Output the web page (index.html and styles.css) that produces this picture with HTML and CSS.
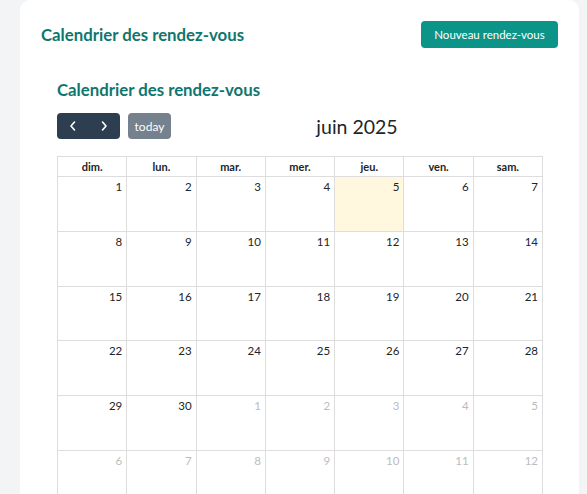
FILE: index.html
```html
<!DOCTYPE html>
<html lang="fr">
<head>
<meta charset="utf-8">
<link rel="stylesheet" href="styles.css">
</head>
<body>
<div class="card">
  <div class="card-header">
    <h1 class="page-title">Calendrier des rendez-vous</h1>
    <button class="btn-new">Nouveau rendez-vous</button>
  </div>
  <div class="cal-wrap">
    <h2 class="cal-title">Calendrier des rendez-vous</h2>
    <div class="toolbar">
      <div class="chunk">
        <div class="btn-group">
          <button class="nav-btn" aria-label="prev"><svg width="10" height="12" viewBox="0 0 10 12"><path d="M6.5 2 L3 6 L6.5 10" fill="none" stroke="#fff" stroke-width="1.6" stroke-linecap="round" stroke-linejoin="round"/></svg></button>
          <button class="nav-btn" aria-label="next"><svg width="10" height="12" viewBox="0 0 10 12"><path d="M3.5 2 L7 6 L3.5 10" fill="none" stroke="#fff" stroke-width="1.6" stroke-linecap="round" stroke-linejoin="round"/></svg></button>
        </div>
        <button class="today-btn" disabled>today</button>
      </div>
      <h2 class="month-title">juin 2025</h2>
      <div class="chunk"></div>
    </div>
    <div class="grid">
      <div class="dow">dim.</div><div class="dow">lun.</div><div class="dow">mar.</div><div class="dow">mer.</div><div class="dow">jeu.</div><div class="dow">ven.</div><div class="dow">sam.</div>
      <div class="day">1</div><div class="day">2</div><div class="day">3</div><div class="day">4</div><div class="day today">5</div><div class="day">6</div><div class="day">7</div>
      <div class="day">8</div><div class="day">9</div><div class="day">10</div><div class="day">11</div><div class="day">12</div><div class="day">13</div><div class="day">14</div>
      <div class="day">15</div><div class="day">16</div><div class="day">17</div><div class="day">18</div><div class="day">19</div><div class="day">20</div><div class="day">21</div>
      <div class="day">22</div><div class="day">23</div><div class="day">24</div><div class="day">25</div><div class="day">26</div><div class="day">27</div><div class="day">28</div>
      <div class="day">29</div><div class="day">30</div><div class="day other">1</div><div class="day other">2</div><div class="day other">3</div><div class="day other">4</div><div class="day other">5</div>
      <div class="day other">6</div><div class="day other">7</div><div class="day other">8</div><div class="day other">9</div><div class="day other">10</div><div class="day other">11</div><div class="day other">12</div>
    </div>
  </div>
</div>
</body>
</html>
```
FILE: styles.css
```css
* { box-sizing: border-box; }
html, body { margin: 0; padding: 0; }
body {
  background: #f3f4f6;
  font-family: Lato, "Open Sans", sans-serif;
  color: #212529;
  overflow: hidden;
  height: 494px;
}
.card {
  margin-left: 20px;
  width: 559px;
  height: 494px;
  overflow: hidden;
  background: #fff;
  border-radius: 10px 10px 0 0;
  padding: 21px 21px 0 21px;
}
.card-header {
  display: flex;
  justify-content: space-between;
  align-items: center;
  height: 27px;
}
.page-title {
  margin: 0;
  font-size: 16.8px;
  font-weight: 700;
  color: #0f766e;
}
.btn-new {
  width: 137px;
  height: 27px;
  border: none;
  border-radius: 4px;
  background: #0d9488;
  color: #fff;
  font-family: inherit;
  font-size: 11.5px;
  font-weight: 400;
  padding: 0;
}
.cal-wrap {
  padding: 30px 15px 0 16px;
}
.cal-title {
  margin: 0;
  font-size: 16.8px;
  line-height: 24px;
  font-weight: 700;
  color: #0f766e;
}
.toolbar {
  margin-top: 11px;
  display: flex;
  justify-content: space-between;
  align-items: center;
  height: 26px;
  margin-bottom: 17px;
}
.chunk { display: flex; align-items: center; gap: 8px; }
.btn-group {
  display: flex;
  background: #2c3e50;
  border-radius: 4px;
  height: 26px;
  width: 63px;
}
.nav-btn {
  flex: 1;
  background: transparent;
  border: none;
  padding: 0;
  display: flex;
  align-items: center;
  justify-content: center;
}
.today-btn {
  height: 26px;
  width: 43px;
  border: none;
  border-radius: 4px;
  background: #2c3e50;
  opacity: 0.65;
  color: #fff;
  font-family: inherit;
  font-size: 12px;
  padding: 0;
}
.month-title {
  margin: 0;
  font-size: 19.5px;
  font-weight: 400;
  color: #212529;
}
.grid {
  display: grid;
  grid-template-columns: repeat(7, 1fr);
  grid-template-rows: 20px repeat(6, 54.8px);
  width: 486px;
  border-top: 1px solid #ddd;
  border-left: 1px solid #ddd;
}
.dow {
  border-right: 1px solid #ddd;
  border-bottom: 1px solid #ddd;
  font-size: 11px;
  font-weight: 700;
  text-align: center;
  line-height: 19px;
  color: #212529;
}
.day {
  border-right: 1px solid #ddd;
  border-bottom: 1px solid #ddd;
  font-size: 11.5px;
  text-align: right;
  padding: 3px 4px 0 0;
  color: #212529;
}
.day.today { background: #fff8de; }
.day.other { color: #bcbcbc; }
```
